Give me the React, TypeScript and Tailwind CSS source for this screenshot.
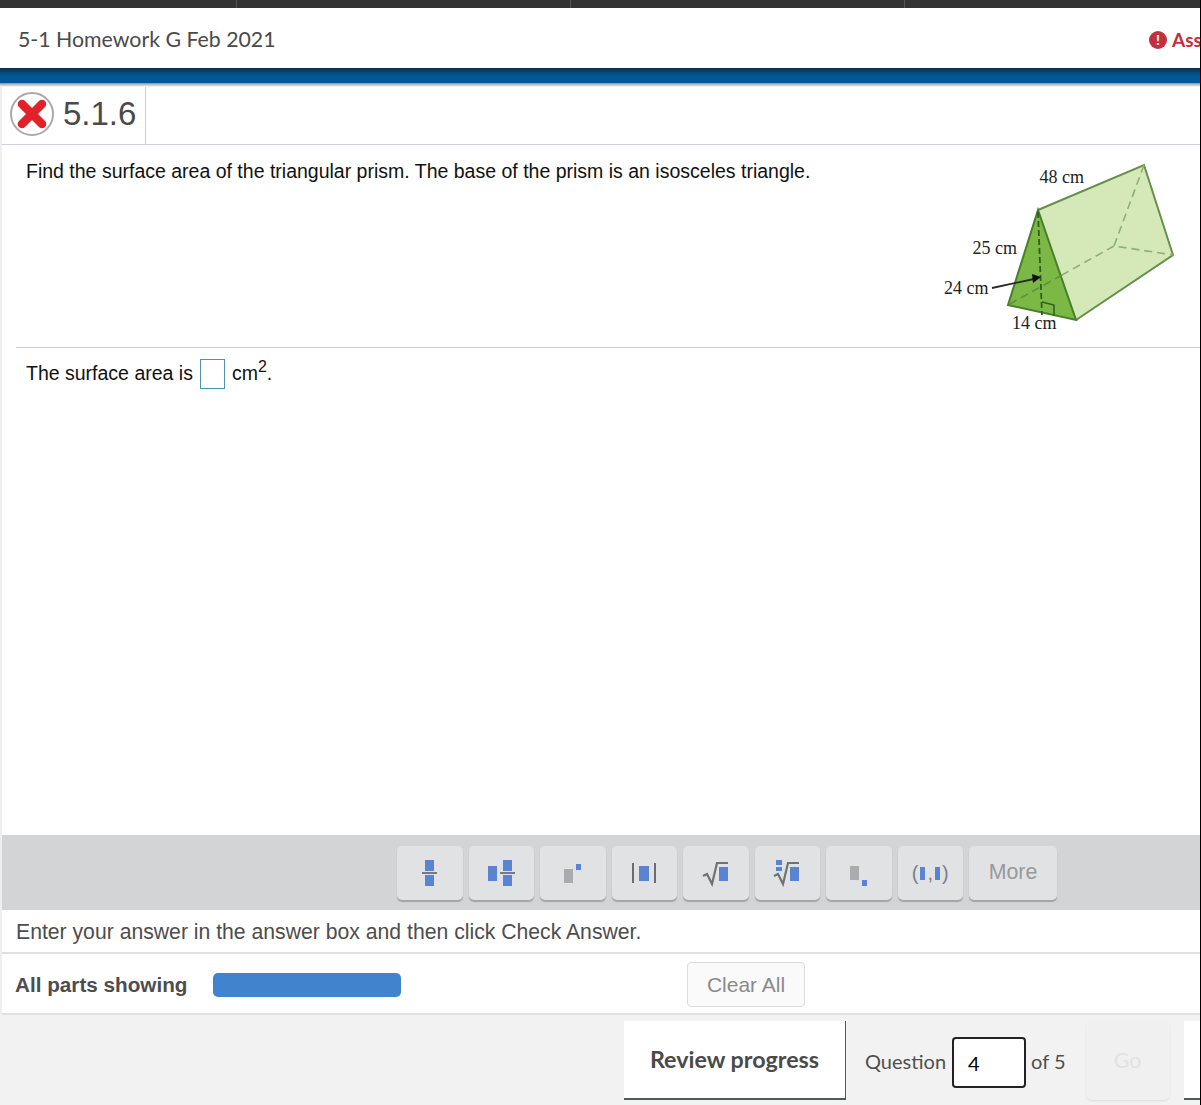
import React from "react";

const Blue = ({ w, h, className = "" }: { w: number; h: number; className?: string }) => (
  <span className={"inline-block bg-[#5b83d3] " + className} style={{ width: w, height: h }} />
);
const Gray = ({ w, h }: { w: number; h: number }) => (
  <span className="inline-block bg-[#a9abae]" style={{ width: w, height: h }} />
);

const Btn = ({ children, w = "w-[65.5px]" }: { children: React.ReactNode; w?: string }) => (
  <div className={"h-[54px] shrink-0 rounded-[5px] bg-[#e1e2e4] shadow-[0_2px_1px_#a2a4a8] flex items-center justify-center " + w}>
    {children}
  </div>
);

const Frac = () => (
  <div className="flex flex-col items-center">
    <Blue w={9} h={11} />
    <span className="w-[15px] h-[2px] bg-[#77797c] my-[1px]" />
    <Blue w={9} h={11} />
  </div>
);

const Sqrt = ({ index }: { index?: boolean }) => (
  <svg width="30" height="28" viewBox="0 0 30 28">
    {index && <rect x="4" y="1" width="6" height="5" fill="#5b83d3" />}
    {index && <rect x="4" y="8" width="6" height="4" fill="#5b83d3" />}
    <path d="M2 17 L6 15 L11 25 L16 4 L27 4" fill="none" stroke="#6f7174" strokeWidth="2.2" />
    <rect x="18" y="8" width="9" height="14" fill="#5b83d3" />
  </svg>
);

const Prism = () => (
  <svg width="271" height="190" viewBox="929 150 271 190" className="block shrink-0 mt-[5px]">
    <polygon points="1038,210 1144,165 1173,255 1076,320" fill="#d4e8b8" />
    <polygon points="1038,210 1076,320 1008,305" fill="#7bb845" />
    <polyline points="1038,210 1144,165 1173,255 1076,320" fill="none" stroke="#668f4b" strokeWidth="2" />
    <polygon points="1038,210 1076,320 1008,305" fill="none" stroke="#497f2b" strokeWidth="2" />
    <g fill="none" stroke="#8fae74" strokeWidth="1.6" strokeDasharray="8 5">
      <polyline points="1144,165 1114,246 1173,255" />
      <line x1="1114" y1="246" x2="1062" y2="275" />
    </g>
    <line x1="1062" y1="275" x2="1008" y2="305" stroke="#5b9436" strokeWidth="1.6" strokeDasharray="8 5" />
    <line x1="1038" y1="212" x2="1042" y2="315" stroke="#2e5f1c" strokeWidth="1.8" strokeDasharray="6 3" />
    <polyline points="1042,302 1054,305 1054,316" fill="none" stroke="#2e5f1c" strokeWidth="1.5" />
    <line x1="992" y1="288" x2="1034" y2="279" stroke="#2a2a2a" strokeWidth="1.8" />
    <polygon points="1041,277 1032,274 1033,283" fill="#111" />
    <g fontFamily="'Liberation Serif', serif" fontSize="18" fill="#222">
      <text x="1039.5" y="183">48 cm</text>
      <text x="972.5" y="254">25 cm</text>
      <text x="944" y="294">24 cm</text>
      <text x="1012" y="329">14 cm</text>
    </g>
  </svg>
);

export default function App() {
  return (
    <div className="w-[1201px] h-[1105px] overflow-hidden flex flex-col bg-white border-r border-black font-['Liberation_Sans',sans-serif]">
      <div className="h-[8px] shrink-0 bg-[#333333] grid grid-cols-[237px_334px_334px_1fr]">
        <div className="border-r border-[#555]" />
        <div className="border-r border-[#555]" />
        <div className="border-r border-[#555]" />
        <div />
      </div>
      <div className="h-[60px] shrink-0 flex items-center justify-between pl-[18px] pt-[4px] font-['Lato',sans-serif]">
        <span className="text-[21.3px] text-[#4a4a4a]">5-1 Homework G Feb 2021</span>
        <span className="flex items-center gap-[5px] w-[51px] overflow-hidden text-[19px] font-bold text-[#c22f3e]">
          <span className="shrink-0 flex items-center justify-center w-[18px] h-[18px] rounded-full bg-[#c22f3e] text-white text-[14px] leading-none">!</span>
          <span>Assignment</span>
        </span>
      </div>
      <div className="h-[15px] shrink-0 bg-gradient-to-b from-[#08304e] via-[#005794] to-[#005a9a]" />
      <div className="h-[4px] shrink-0 bg-gradient-to-b from-[#8d949b] to-white" />

      <div className="flex-1 flex flex-col border-l-2 border-[#efefef]">
        <div className="h-[58px] shrink-0 flex border-b border-[#d0d1d6]">
          <div className="w-[144px] flex items-center pl-[8px] gap-[9px] pb-[4px] border-r border-[#d0d1d6]">
            <div className="w-[44px] h-[44px] rounded-full bg-white border-2 border-[#a9a9a9] flex items-center justify-center">
              <svg width="34" height="34" viewBox="0 0 34 34">
                <path d="M7 7 L27 27 M27 7 L7 27" stroke="#e2222a" strokeWidth="8.5" strokeLinecap="round" />
              </svg>
            </div>
            <span className="text-[33px] leading-none text-[#4a4a4a]">5.1.6</span>
          </div>
        </div>

        <div className="h-[202px] shrink-0 flex justify-between pl-[14px]">
          <div className="pl-[10px] pt-[13px] text-[19.5px] leading-[26px] text-[#111]">
            Find the surface area of the triangular prism. The base of the prism is an isosceles triangle.
          </div>
          <Prism />
        </div>
        <div className="ml-[14px] border-t border-[#cfd0d3]" />

        <div className="flex-1 pl-[24px] pt-[10px]">
          <div className="flex items-center h-[32px] text-[19.5px] text-[#111]">
            <span>The surface area is</span>
            <span className="w-[25px] h-[30px] mx-[7px] border border-[#4f93ad]" />
            <span>cm<sup className="text-[16px] align-baseline relative -top-[8px]">2</sup>.</span>
          </div>
        </div>

        <div className="h-[75px] shrink-0 bg-[#d3d4d6] flex items-center justify-start gap-[6px] pl-[395px] pt-[1px]">
          <Btn><Frac /></Btn>
          <Btn>
            <div className="flex items-center gap-[3px]">
              <Blue w={9} h={15} />
              <Frac />
            </div>
          </Btn>
          <Btn>
            <div className="flex items-start gap-[3px]">
              <span className="mt-[5px] flex"><Gray w={9} h={14} /></span>
              <Blue w={5} h={6} />
            </div>
          </Btn>
          <Btn>
            <div className="flex items-center gap-[5px]">
              <span className="w-[2px] h-[20px] bg-[#6a6c70]" />
              <Blue w={10} h={15} />
              <span className="w-[2px] h-[20px] bg-[#6a6c70]" />
            </div>
          </Btn>
          <Btn><Sqrt /></Btn>
          <Btn><Sqrt index /></Btn>
          <Btn>
            <div className="flex items-end gap-[3px]">
              <Gray w={9} h={14} />
              <span className="flex -mb-[6px]"><Blue w={5} h={6} /></span>
            </div>
          </Btn>
          <Btn>
            <div className="flex items-center gap-[2px] text-[20px] text-[#7b7f90]">
              <span>(</span><Blue w={5} h={13} /><span>,</span><Blue w={5} h={13} /><span>)</span>
            </div>
          </Btn>
          <Btn w="w-[88px]"><span className="text-[21.3px] text-[#97999c]">More</span></Btn>
        </div>

        <div className="h-[42px] shrink-0 flex items-center pl-[14px] pt-[1px] text-[21.2px] text-[#4d4d4d]">
          Enter your answer in the answer box and then click Check Answer.
        </div>
        <div className="h-[63px] shrink-0 flex items-center pt-[2px] border-y-2 border-[#dfe0e4]">
          <span className="pl-[13px] w-[211px] shrink-0 text-[20.7px] font-bold text-[#4d4d4d]">All parts showing</span>
          <span className="w-[188px] h-[24px] shrink-0 rounded-[5px] bg-[#3f84cc]" />
          <span className="ml-[286px] w-[118px] h-[45px] shrink-0 rounded-[4px] border border-[#dcdcdc] bg-[#fafafa] flex items-center justify-center text-[21px] text-[#8a8a8a]">
            Clear All
          </span>
        </div>
      </div>

      <div className="h-[90px] shrink-0 bg-[#f2f2f2] flex items-start pl-[624px] pt-[6px] font-['Lato',sans-serif] whitespace-nowrap">
        <div className="w-[222px] h-[79px] shrink-0 bg-white border-r border-b-2 border-[#55585c] flex items-center justify-center text-[23.3px] font-bold text-[#4a4a4a]">
          Review progress
        </div>
        <div className="ml-[19px] h-[79px] shrink-0 flex items-center text-[20px] text-[#4f4f4f]">
          <span>Question</span>
          <span className="ml-[6px] mr-[5px] mt-[4px] w-[74px] h-[51px] rounded-[4px] border-2 border-[#222] bg-white flex items-center pl-[14px] text-black">4</span>
          <span>of 5</span>
        </div>
        <div className="ml-[20px] w-[84px] h-[79px] shrink-0 rounded-[6px] bg-[#f0f0f0] shadow-[0_1px_2px_#dcdcdc] flex items-center justify-center text-[21.5px] text-[#e2e2e2]">
          Go
        </div>
        <div className="ml-[14px] w-[16px] h-[79px] shrink-0 bg-white border-b-2 border-[#55585c]" />
      </div>
    </div>
  );
}
